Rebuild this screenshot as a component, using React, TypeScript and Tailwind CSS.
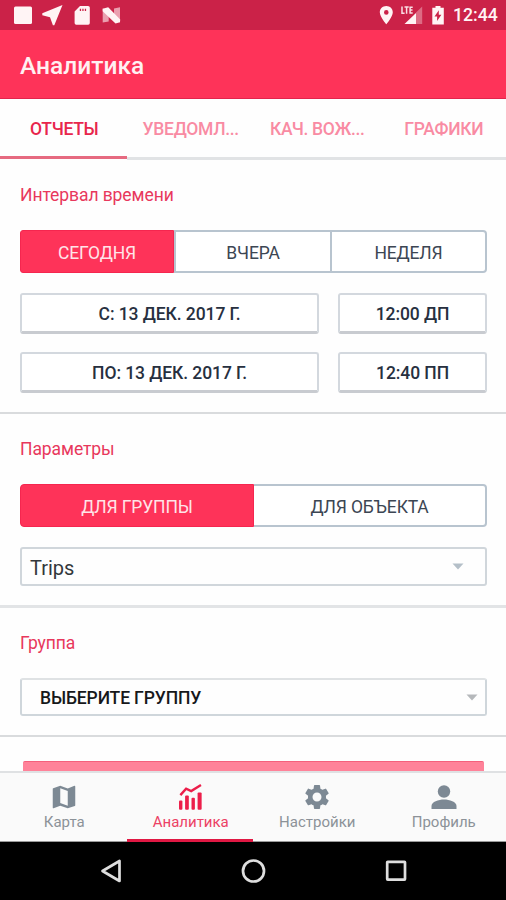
/*
 * Analytics screen: reports tab with time interval, parameters and group pickers
 */
import type { ReactNode } from "react";
import clsx from "clsx";
import { MdMap, MdSettings } from "react-icons/md";

const TABS = ["ОТЧЕТЫ", "УВЕДОМЛ...", "КАЧ. ВОЖ...", "ГРАФИКИ"];

export default function App() {
  return (
    <div className="flex h-[900px] w-[506px] flex-col overflow-hidden bg-white font-['Roboto',sans-serif]">
      <StatusBar />

      <header className="flex h-[69px] shrink-0 items-center border-b border-[#e2244c] bg-[#fe3359] pl-5 pt-1">
        <h1 className="text-[24.5px] font-medium text-[#fff0f2]">Аналитика</h1>
      </header>

      <Tabs />

      <main className="flex min-h-0 flex-1 flex-col overflow-hidden bg-[#fefefe]">
        {/* Time interval */}
        <section className="h-[254px] shrink-0 border-b-2 border-[#d9dbdd] pl-5 pr-[19px] pt-[22px]">
          <SectionTitle>Интервал времени</SectionTitle>
          <div className="mt-[22px] flex h-[43px]">
            <Segment active className="w-[154px] rounded-l-[3px]">СЕГОДНЯ</Segment>
            <Segment className="w-[158px]">ВЧЕРА</Segment>
            <Segment className="flex-1 rounded-r-[4px] border-l-0">НЕДЕЛЯ</Segment>
          </div>
          <DateRow date="С: 13 ДЕК. 2017 Г." time="12:00 ДП" className="mt-5" />
          <DateRow date="ПО: 13 ДЕК. 2017 Г." time="12:40 ПП" className="mt-[18px]" />
        </section>

        {/* Parameters */}
        <section className="h-[194px] shrink-0 border-b-[3px] border-[#e2e4e6] pl-5 pr-[19px] pt-[22px]">
          <SectionTitle>Параметры</SectionTitle>
          <div className="mt-[22px] flex h-[43px]">
            <Segment active className="w-[234px] rounded-l-[4px]">ДЛЯ ГРУППЫ</Segment>
            <Segment className="flex-1 rounded-r-[4px] border-l-0">ДЛЯ ОБЪЕКТА</Segment>
          </div>
          <div className="mt-5 flex h-[39px] items-center justify-between rounded-[3px] border-2 border-[#d0d6db] pl-[8px] pr-[21px]">
            <span className="pt-[2px] text-[20px] text-[#33373b]">Trips</span>
            <Caret className="text-[#b4bfc8]" />
          </div>
        </section>

        {/* Group */}
        <section className="h-[129px] shrink-0 border-b-2 border-[#d9dbdd] pl-5 pr-[19px] pt-[22px]">
          <SectionTitle>Группа</SectionTitle>
          <div className="mt-[22px] flex h-[38px] items-center justify-between rounded-[3px] border-2 border-[#cfd6db] border-t-[#dfe2e4] pl-[18px] pr-[7px]">
            <span className="pt-[3px] text-[17.5px] font-medium tracking-[-0.13px] text-[#17181a]">ВЫБЕРИТЕ ГРУППУ</span>
            <Caret className="text-[#b5b8bb]" />
          </div>
        </section>

        <div className="ml-[23px] mr-[22px] mt-6 h-12 shrink-0 rounded-[2px] border-t border-[#f4607c] bg-[#ff8299]" />
      </main>

      <BottomNav />
      <SystemBar />
    </div>
  );
}

function StatusBar() {
  return (
    <div className="flex h-[30px] shrink-0 items-center justify-between bg-[#cb2248] text-[#fff4f5]">
      <svg width="126" height="30" viewBox="0 0 126 30" fill="currentColor">
        <rect x="14" y="6.5" width="18" height="17.5" rx="1.5" />
        <path d="M62.500 5 42.300 13.200v2l7.700 2 2.900 8h1.400z" />
        <path fillRule="evenodd" d="M80 6h8q1.800 0 1.800 1.600v15.400q0 1.700-1.600 1.700H76.300q-1.700 0-1.700-1.700V11.400zm-.2 2.800v2.300h1.300v-2.300zm2.500 0v2.300h1.300v-2.300zm2.500 0v2.300h1.300v-2.300z" />
        <path opacity=".6" d="M102.700 8.500l6 2v11l-6 1zM114 8.500l6-1.300v15l-6-1z" />
        <path d="M102.700 8.700l5.500-1.500 12 12.300-.2 2.700-4.500 1.200-12.800-12.200z" />
      </svg>
      <div className="flex items-center">
        <svg width="70" height="30" viewBox="376 0 70 30" fill="currentColor">
          <path fillRule="evenodd" d="M386.300 6c-3.800 0-6.500 2.800-6.500 6.300 0 4.500 6.500 12 6.500 12s6.500-7.500 6.500-12c0-3.500-2.700-6.300-6.500-6.300zm0 4.100a2.300 2.300 0 1 1 0 4.600 2.300 2.300 0 0 1 0-4.600z" />
          <path d="M402 6.500v6.700h2.600M404.500 7h4.200M406.600 7v6.700M412.700 7.200h-2.600v5.800h2.600M410 10.100h2.500" fill="none" stroke="currentColor" strokeWidth="1.500" opacity=".9" />
          <path d="M404.500 24l11.500-11v11z" />
          <path opacity=".35" d="M416 12.500l6.200-6V24H416z" />
          <path fillRule="evenodd" d="M435.500 6h5v1.800h3.300V24.500h-11.500V7.800h3.200zm3.300 4.300l-4.300 6.200h2.600V21l4.300-6.300h-2.600z" />
        </svg>
        <span className="w-[60px] pl-[7px] pt-[2px] text-[17.700px] font-medium leading-none">12:44</span>
      </div>
    </div>
  );
}

function Tabs() {
  return (
    <nav className="grid h-[61px] shrink-0 grid-cols-4 bg-[#fefefe]">
      {TABS.map((label, i) => (
        <div
          key={label}
          className={clsx(
            "flex items-center justify-center whitespace-nowrap pl-[2px] text-[17.5px] font-medium tracking-[-0.3px]",
            i === 0
              ? "h-[60px] border-b-[3px] border-[#e66a80] pt-[3px] text-[#e8264c]"
              : "h-[61px] border-b-[3px] border-[#e1e3e5] pt-[2px] text-[#f98ba3]",
          )}
        >
          {label}
        </div>
      ))}
    </nav>
  );
}

function SectionTitle({ children }: { children: ReactNode }) {
  return <h2 className="h-[26px] text-[17.5px] leading-[26px] tracking-[-0.08px] text-[#e8385c]">{children}</h2>;
}

function Segment({ active, className, children }: { active?: boolean; className?: string; children: ReactNode }) {
  return (
    <button
      className={clsx(
        "flex items-center justify-center pt-[3px] text-[17.5px] tracking-[-0.15px]",
        active ? "border border-[#f5264f] bg-[#fe3359] text-[#ffe4e8]" : "border-2 border-[#b8c4cf] bg-white text-[#3c4653]",
        className,
      )}
    >
      {children}
    </button>
  );
}

function DateRow({ date, time, className }: { date: string; time: string; className: string }) {
  return (
    <div className={clsx("flex gap-[19px]", className)}>
      <FieldButton className="w-[299px]">{date}</FieldButton>
      <FieldButton className="flex-1">{time}</FieldButton>
    </div>
  );
}

function FieldButton({ className, children }: { className: string; children: ReactNode }) {
  return (
    <button
      className={clsx(
        "flex h-[41px] items-center justify-center rounded-[3px] border-2 border-[#d3d8de] border-b-[3px] border-b-[#c8cbd0] bg-white pt-[3px] text-[17.5px] font-medium tracking-[-0.08px] text-[#27303f]",
        className,
      )}
    >
      {children}
    </button>
  );
}

function Caret({ className }: { className: string }) {
  return (
    <svg width="12" height="7" viewBox="0 0 12 7" fill="currentColor" className={className}>
      <path d="M.5.5h11L6 6.500z" />
    </svg>
  );
}

function BottomNav() {
  return (
    <nav className="grid h-[71px] shrink-0 grid-cols-4 border-t-2 border-[#dfe1e3] bg-[#fafafa] text-[#7d8994]">
      <NavItem label="Карта">
        <MdMap size={30} />
      </NavItem>
      <NavItem label="Аналитика" active>
        <svg width="23" height="26" viewBox="537 87 68 77" fill="currentColor">
          <path d="M541 120l17-19 15 7 29-18" fill="none" stroke="currentColor" strokeWidth="7" />
          <rect x="537" y="136" width="10" height="27" rx="3" />
          <rect x="555" y="121" width="11" height="42" rx="3" />
          <rect x="574" y="128" width="10" height="35" rx="3" />
          <rect x="592" y="112" width="12" height="51" rx="3" />
        </svg>
      </NavItem>
      <NavItem label="Настройки">
        <MdSettings size={30} />
      </NavItem>
      <NavItem label="Профиль">
        <svg width="26" height="26" viewBox="0 0 26 26" fill="currentColor">
          <circle cx="13" cy="7.500" r="6.200" />
          <path d="M.5 25v-3c0-4.200 7-6.500 12.500-6.500S25.500 17.800 25.500 22v3z" />
        </svg>
      </NavItem>
    </nav>
  );
}

function NavItem({ label, active, children }: { label: string; active?: boolean; children: ReactNode }) {
  return (
    <div
      className={clsx(
        "flex flex-col items-center pl-[2px]",
        active ? "border-b-[3px] border-[#e01843] text-[#ec1e4a]" : "border-b border-[#9a9a9a]",
      )}
    >
      <div className="mt-[9px] flex h-[30px] items-center">{children}</div>
      <span className={clsx("text-[15px] leading-[21px]", active ? "text-[#ec4164]" : "text-[#8c9298]")}>{label}</span>
    </div>
  );
}

function SystemBar() {
  return (
    <div className="flex h-[58px] shrink-0 items-center justify-center bg-black">
      <svg width="310" height="28" viewBox="98 857 310 28" fill="none" stroke="#dedede" strokeWidth="2.700">
        <path d="M102.500 871l17-10v20z" strokeLinejoin="round" />
        <circle cx="253.500" cy="871" r="10.500" />
        <rect x="387.200" y="861.800" width="17.800" height="17.800" rx=".5" />
      </svg>
    </div>
  );
}
